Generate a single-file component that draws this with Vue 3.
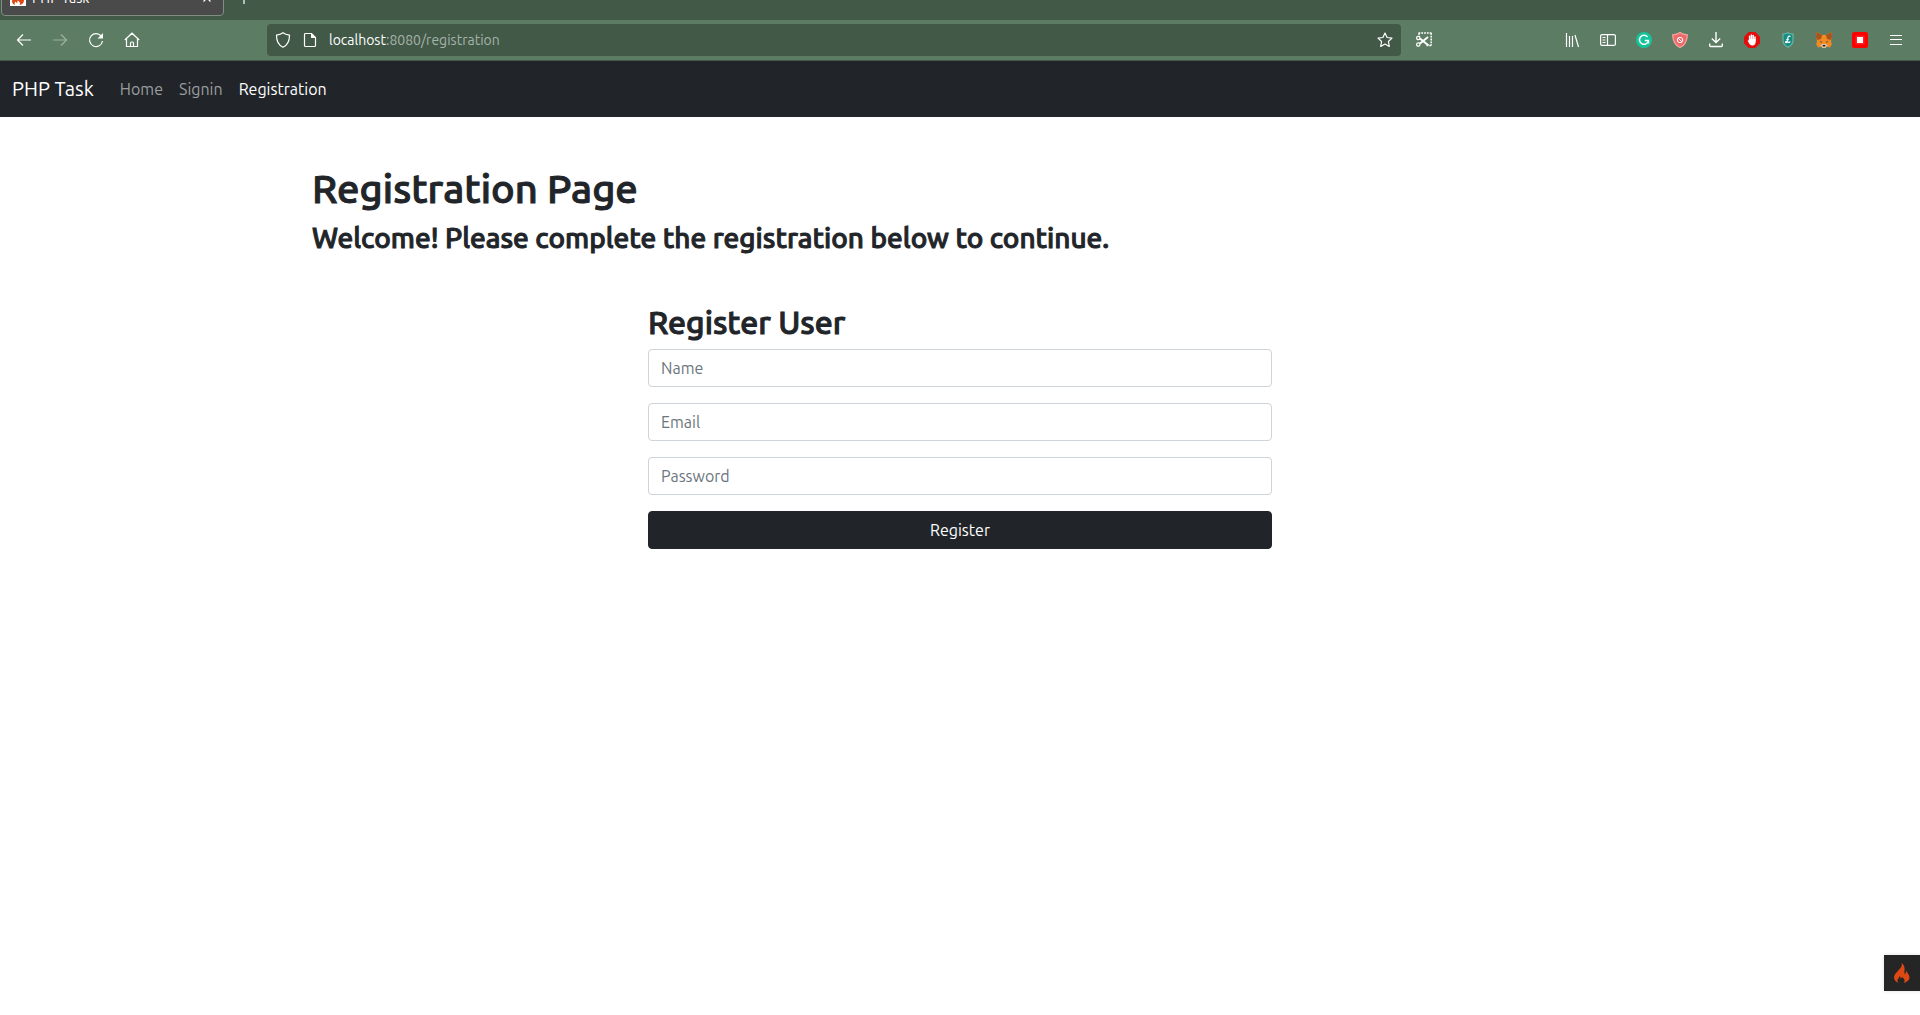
<script setup>
import { ref } from 'vue'

const links = [
  { label: 'Home', active: false },
  { label: 'Signin', active: false },
  { label: 'Registration', active: true },
]

const fields = [
  { id: 'name', type: 'text', label: 'Name', value: ref('') },
  { id: 'email', type: 'email', label: 'Email', value: ref('') },
  { id: 'password', type: 'password', label: 'Password', value: ref('') },
]
</script>

<template>
  <div class="window">
    <div class="tabstrip">
      <div class="tab">
        <svg class="favicon" width="16" height="16" viewBox="0 0 16 16">
          <rect width="16" height="16" fill="#fff" stroke="none" />
          <path d="M8.500 1c.6 2-.5 3-2 4.500C4 7.500 2 9 2 11.500c0 1.800 1.500 3 3.200 3.500-1-1.300-.7-2.700.6-3.500.1 1 .6 1.300 1.200 1.200.8-.3.6-1.200.4-2.200 2.400 1 3.200 2.800 2 4.500 2.600-.4 4.600-2 4.600-4.400 0-2-1.700-3-2.200-4.600-.6.7-.9 1.200-.6 2C9.300 6.500 10.500 3.500 8.500 1z" fill="#dd4814" stroke="none" />
        </svg>
        <span class="tab-title">PHP Task</span>
        <button class="plain close" aria-label="Close tab">
          <svg width="8" height="8" viewBox="0 0 8 8"><path d="M.5.5l7 7M7.500.5l-7 7" /></svg>
        </button>
      </div>
      <button class="plain new-tab" aria-label="New tab">
        <svg width="12" height="12" viewBox="0 0 12 12"><path d="M6 0v12M0 6h12" /></svg>
      </button>
    </div>

    <div class="toolbar">
      <button class="plain tool" aria-label="Back">
        <svg width="16" height="16" viewBox="0 0 16 16"><path d="M15 8H1.500M7 2.500L1.500 8 7 13.500" /></svg>
      </button>
      <button class="plain tool" aria-label="Forward" disabled>
        <svg width="16" height="16" viewBox="0 0 16 16"><path d="M1 8h13.500M9 2.500L14.500 8 9 13.500" /></svg>
      </button>
      <button class="plain tool" aria-label="Reload">
        <svg width="16" height="16" viewBox="0 0 16 16">
          <path d="M13.500 4.500A6.500 6.500 0 1 0 14.500 9" />
          <path d="M15 1v5.500H9.500z" fill="#fff" stroke="none" />
        </svg>
      </button>
      <button class="plain tool" aria-label="Home page">
        <svg width="16" height="16" viewBox="0 0 16 16">
          <path d="M.8 8L8 1.200 15.200 8M2.500 7v7.500h11V7M6.500 14.500v-3.500a1 1 0 0 1 1-1h1a1 1 0 0 1 1 1v3.500" />
        </svg>
      </button>
      <span class="spring"></span>

      <div class="urlbar">
        <svg width="16" height="16" viewBox="0 0 16 16"><path d="M8 .8c2 1.500 4 2 6.500 2.400 0 5.500-1.500 9.800-6.500 12-5-2.200-6.500-6.500-6.500-12C4 2.800 6 2.300 8 .8z" /></svg>
        <svg class="doc" width="16" height="16" viewBox="0 0 16 16">
          <path d="M9.500 1.500h-6a1 1 0 0 0-1 1v11a1 1 0 0 0 1 1h9a1 1 0 0 0 1-1v-8z" />
          <path d="M9 1l5 5H9z" fill="#fff" stroke="none" />
        </svg>
        <div class="address"><span class="host">localhost</span>:8080/registration</div>
        <button class="plain tool star" aria-label="Bookmark this page">
          <svg width="16" height="16" viewBox="0 0 16 16"><path d="M8 1l2.100 4.500 4.900.6-3.600 3.400.9 5L8 12.100l-4.300 2.400.9-5L1 6.100l4.900-.6z" stroke-linejoin="round" /></svg>
        </button>
      </div>

      <button class="plain tool" aria-label="Screenshot">
        <svg width="16" height="16" viewBox="0 0 16 16">
          <path d="M2.500 1H16M15.200 1v12.500M3 1v4M10.500 13.500H16" stroke-width="1.600" stroke-dasharray="1.800 1" />
          <path d="M4 6.500l8.500 7M4 11.500l8-6.500" stroke-width="2" />
          <circle cx="2.300" cy="6" r="1.700" /><circle cx="2.300" cy="12.500" r="1.700" />
        </svg>
      </button>
      <span class="spring"></span>

      <button class="plain tool" aria-label="Library">
        <svg width="16" height="16" viewBox="0 0 16 16"><path d="M2.500 1v14M5.500 4v11M8.500 4v11M11 3l3.500 12" /></svg>
      </button>
      <button class="plain tool" aria-label="Sidebars">
        <svg width="16" height="16" viewBox="0 0 16 16">
          <rect x=".6" y="2.600" width="14.800" height="10.800" rx="1.500" />
          <path d="M7.500 2.600v10.800M2.500 5.500h3M2.500 8h3M2.500 10.500h3" />
        </svg>
      </button>
      <button class="plain tool" aria-label="Grammar checker">
        <svg width="16" height="16" viewBox="0 0 16 16">
          <circle cx="8" cy="8" r="8" fill="#15c39a" stroke="none" />
          <path d="M11.500 5A4.500 4.500 0 1 0 12.400 8.800M8.800 8.600h3.600v3" stroke-width="1.500" />
        </svg>
      </button>
      <button class="plain tool" aria-label="Tracking blocker">
        <svg width="16" height="16" viewBox="0 0 16 16">
          <path d="M8 .6c2 1.300 4.300 2.100 7.300 2.300-.1 6-1.900 10.100-7.300 12.600C2.600 13 .8 8.900.7 2.900 3.700 2.700 6 1.900 8 .6z" fill="#f06a6a" stroke="#f5a5a0" />
          <circle cx="8" cy="8" r="2.700" stroke-width="1" /><path d="M6 6l4 4" stroke-width="1" />
        </svg>
      </button>
      <button class="plain tool" aria-label="Downloads">
        <svg width="16" height="16" viewBox="0 0 16 16"><path d="M8 0v10.500M3.800 6.500L8 10.500l4.200-4M1.700 11.500v2a1 1 0 0 0 1 1h10.600a1 1 0 0 0 1-1v-2" stroke-width="1.400" /></svg>
      </button>
      <button class="plain tool" aria-label="Ad blocker">
        <svg width="16" height="16" viewBox="0 0 16 16">
          <path d="M4.700 0h6.600L16 4.700v6.600L11.300 16H4.700L0 11.300V4.700z" fill="#e40d0d" stroke="none" />
          <path d="M5.600 8V4.200M7.400 7.500V3M9.200 7.500V3.500M11 8.500V5" stroke-width="1.500" stroke-linecap="round" />
          <path d="M4.900 7h6.800v3c0 2-1.200 3.400-3.300 3.400-1.800 0-2.700-.8-3.400-2.200L3.600 8.800c.3-.8 1-.7 1.300-.2z" fill="#fff" stroke="none" />
        </svg>
      </button>
      <button class="plain tool" aria-label="Shield extension">
        <svg width="16" height="16" viewBox="0 0 16 16">
          <path d="M8 .8c1.500.9 3 1.300 5 1.400v6.300c0 3-2 5.200-5 6.700-3-1.500-5-3.700-5-6.700V2.200C5 2.100 6.500 1.700 8 .8z" fill="#168c82" stroke="#67b5a8" />
          <path d="M10 5c0-1.500-1.700-1.300-2 .3L7.200 9.500c-.3 1.200-1.600 1.500-1.600.5s1.800-.3 2.600.2 1.600.3 2-.6M6.300 7.600h2.500" stroke-width="1.200" />
        </svg>
      </button>
      <button class="plain tool" aria-label="Wallet">
        <svg width="16" height="16" viewBox="0 0 16 16" stroke="none">
          <path d="M.5 0L6 3h4L15.500 0 16 5l-1 4 .8 3.500-2 3-3-.7-1.200.7H6.400l-1.200-.7-3 .7-2-3L1 9 0 5z" fill="#f08a24" />
          <path d="M.5 0L6 3 5 7 1 8 0 5zM15.500 0L10 3 11 7l4 1 1-3z" fill="#a9531f" />
          <path d="M3.500 9l2.500.7-.5 1zM12.500 9l-2.500.7.5 1z" fill="#3c3a38" />
          <path d="M4.500 13l2-1h3l2 1-2 3h-3z" fill="#d8c4b2" />
          <path d="M6.500 13h3l-.7 1.500H7.200z" fill="#17191b" />
        </svg>
      </button>
      <button class="plain tool" aria-label="Screen recorder">
        <svg width="16" height="16" viewBox="0 0 16 16" stroke="none">
          <rect width="16" height="16" rx="2.500" fill="#f00" />
          <rect x="3.500" y="3.500" width="9" height="9" rx="1" fill="#f22" />
          <rect x="5" y="5" width="6" height="6" fill="#fff" />
        </svg>
      </button>
      <button class="plain tool" aria-label="Application menu">
        <svg width="16" height="16" viewBox="0 0 16 16"><path d="M2 3.500h12M2 7.500h12M2 12.500h12" /></svg>
      </button>
    </div>

    <nav class="navbar">
      <a class="brand" href="#">PHP Task</a>
      <a
        v-for="link in links"
        :key="link.label"
        class="nav-link"
        :class="{ active: link.active }"
        href="#"
      >{{ link.label }}</a>
    </nav>

    <main class="container">
      <h1>Registration Page</h1>
      <h3>Welcome! Please complete the registration below to continue.</h3>
      <form class="register" @submit.prevent>
        <h2>Register User</h2>
        <div v-for="field in fields" :key="field.id" class="field">
          <input
            :id="field.id"
            v-model="field.value.value"
            :type="field.type"
            :placeholder="field.label"
            :aria-label="field.label"
          />
        </div>
        <button class="submit" type="submit">Register</button>
      </form>
    </main>

    <button class="plain debug" aria-label="Debug toolbar">
      <svg width="20" height="22" viewBox="0 0 20 22" stroke="none">
        <path d="M9.500 1c1 2.600-.3 4.200-2.600 6.800C4.500 10.500 2 12.500 2 15.600c0 2.600 1.800 4.500 4.600 5.400-1.500-1.500-1.600-3.500.1-4.900.7-.6.900-1.200.8-2 1 .6 1.300 1.400 1 2.600.8-.2 1.300-.7 1.500-1.600 2.800 1.800 3.500 4 1.600 5.900 3.500-.7 5.900-3 5.900-5.700 0-3-2.300-4-2.900-6.400-1 .9-1.100 1.700-.9 2.900-.6.300-1.200 0-1.300-.8C12.200 8.300 14 4.300 9.500 1z" fill="#dd4814" />
      </svg>
    </button>
  </div>
</template>

<style>
body {
  margin: 0;
  background: #fff;
}
</style>

<style scoped>
.window {
  font-family: Ubuntu, "Noto Sans", sans-serif;
  font-size: 16px;
  line-height: 24px;
  color: #212529;
}

.window * {
  box-sizing: border-box;
}

svg {
  display: block;
  flex: none;
  fill: none;
  stroke: #fff;
  stroke-width: 1.2;
}

svg[stroke="none"] {
  stroke: none;
}

.plain {
  display: flex;
  align-items: center;
  justify-content: center;
  padding: 0;
  border: 0;
  background: none;
}

.tabstrip {
  display: flex;
  align-items: flex-end;
  height: 20px;
  padding: 0 1px 4px;
  overflow: hidden;
  background: #425948;
}

.tab {
  display: flex;
  flex: none;
  align-items: center;
  gap: 6px;
  width: 223px;
  height: 36px;
  padding: 0 12px 0 8px;
  border: 1px solid #7f8f82;
  border-radius: 4px;
  background: #4a4a4a;
  color: #fff;
  font-size: 14px;
}

.tab-title {
  flex: 1;
}

.new-tab {
  width: 40px;
  height: 36px;
}

.toolbar {
  display: flex;
  align-items: center;
  height: 41px;
  padding: 0 6px;
  border-bottom: 1px solid #425948;
  background: #5d7c64;
}

.tool {
  flex: none;
  width: 36px;
  height: 32px;
}

.star {
  width: 32px;
}

.tool:disabled {
  opacity: 0.4;
}

.spring {
  flex: none;
  width: 112px;
}

.urlbar {
  display: flex;
  flex: 1;
  align-items: center;
  gap: 11px;
  height: 32px;
  margin: 0 5px;
  padding-left: 8px;
  border-radius: 4px;
  background: #425948;
}

.address {
  flex: 1;
  color: #a6b3a9;
  font-size: 14px;
}

.host {
  color: #fff;
}

.navbar {
  display: flex;
  align-items: center;
  height: 56px;
  padding: 0 12px;
  background: #212529;
}

.brand {
  margin-right: 18px;
  color: #fff;
  font-size: 20px;
  text-decoration: none;
}

.nav-link {
  padding: 8px;
  color: #9b9d9e;
  text-decoration: none;
}

.nav-link.active {
  color: #fff;
}

.container {
  max-width: 1320px;
  margin: 0 auto;
  padding: 48px 12px;
}

h1,
h2,
h3 {
  margin: 0 0 8px;
  font-weight: 500;
  -webkit-text-stroke: 1px #212529;
}

h1 {
  font-size: 40px;
  line-height: 48px;
}

h2 {
  font-size: 32px;
  line-height: 38px;
}

h3 {
  font-size: 28px;
  line-height: 34px;
}

.register {
  width: 50%;
  min-width: 280px;
  max-width: 624px;
  margin: 48px auto 0;
}

.field {
  margin-bottom: 16px;
}

input,
.submit {
  display: block;
  width: 100%;
  height: 38px;
  padding: 6px 12px;
  border: 1px solid #ced4da;
  border-radius: 4px;
  background: #fff;
  font: inherit;
}

input::placeholder {
  color: #6c757d;
  opacity: 1;
}

.submit {
  border-color: #212529;
  background: #212529;
  color: #fff;
}

.debug {
  position: fixed;
  right: 0;
  bottom: 24px;
  width: 36px;
  height: 36px;
  background: #252525;
  box-shadow: 0 0 4px #dfdfdf;
}
</style>
